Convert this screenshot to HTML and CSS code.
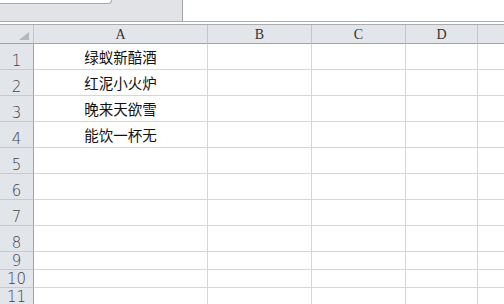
FILE: index.html
```html
<!DOCTYPE html>
<html lang="zh-CN">
<head>
    <meta charset="UTF-8">
    <title>Sheet1</title>
    <link rel="stylesheet" href="styles.css">
</head>
<body>
    <div class="topbar">
        <div class="namepane">
            <div class="nametab"></div>
        </div>
        <div class="formula"></div>
    </div>
    <div class="gap"></div>

    <div class="sheet">
        <!-- header row -->
        <div class="corner">
            <svg width="10" height="8" viewBox="0 0 10 8"><polygon points="10,0 10,8 0,8" fill="#b4b7bb"/></svg>
        </div>
        <div class="colhead">A</div>
        <div class="colhead">B</div>
        <div class="colhead">C</div>
        <div class="colhead">D</div>
        <div class="colhead last"></div>

        <div class="rowhead">1</div><div class="cell">绿蚁新醅酒</div><div class="cell"></div><div class="cell"></div><div class="cell"></div><div class="cell last"></div>
        <div class="rowhead">2</div><div class="cell">红泥小火炉</div><div class="cell"></div><div class="cell"></div><div class="cell"></div><div class="cell last"></div>
        <div class="rowhead">3</div><div class="cell">晚来天欲雪</div><div class="cell"></div><div class="cell"></div><div class="cell"></div><div class="cell last"></div>
        <div class="rowhead">4</div><div class="cell">能饮一杯无</div><div class="cell"></div><div class="cell"></div><div class="cell"></div><div class="cell last"></div>
        <div class="rowhead">5</div><div class="cell"></div><div class="cell"></div><div class="cell"></div><div class="cell"></div><div class="cell last"></div>
        <div class="rowhead">6</div><div class="cell"></div><div class="cell"></div><div class="cell"></div><div class="cell"></div><div class="cell last"></div>
        <div class="rowhead">7</div><div class="cell"></div><div class="cell"></div><div class="cell"></div><div class="cell"></div><div class="cell last"></div>
        <div class="rowhead">8</div><div class="cell"></div><div class="cell"></div><div class="cell"></div><div class="cell"></div><div class="cell last"></div>
        <div class="rowhead">9</div><div class="cell"></div><div class="cell"></div><div class="cell"></div><div class="cell"></div><div class="cell last"></div>
        <div class="rowhead">10</div><div class="cell"></div><div class="cell"></div><div class="cell"></div><div class="cell"></div><div class="cell last"></div>
        <div class="rowhead">11</div><div class="cell"></div><div class="cell"></div><div class="cell"></div><div class="cell"></div><div class="cell last"></div>
    </div>
</body>
</html>
```

FILE: styles.css
```css
* {
    margin: 0;
    padding: 0;
    box-sizing: border-box;
}
body {
    font-family: "Noto Sans CJK SC", sans-serif;
    background: #fff;
    color: #222;
    overflow: hidden;
}
.topbar {
    display: flex;
    height: 22px;
    border-bottom: 1px solid #a9abae;
}
.namepane {
    width: 183px;
    background: #e1e3e6;
    border-right: 1px solid #a3a5a8;
}
.nametab {
    width: 112px;
    height: 4px;
    background: #fff;
    border-bottom: 1px solid #a9abae;
    border-right: 1px solid #a9abae;
    border-bottom-right-radius: 6px;
}
.formula {
    flex: 1;
}
.gap {
    height: 2px;
    border-bottom: 1px solid #a9abae;
    box-sizing: content-box;
}
.sheet {
    display: grid;
    grid-template-columns: 34px 174px 104px 94px 72px 1fr;
    grid-template-rows: 19px repeat(8, 26px) repeat(3, 18px);
}
.corner, .colhead, .rowhead {
    background: #e2e5ea;
    border-right: 1px solid #c3c6cb;
    border-bottom: 1px solid #9fa2a6;
}
.corner {
    display: flex;
    justify-content: flex-end;
    align-items: flex-end;
    padding: 0 4px 3px 0;
}
.colhead {
    font-family: "Liberation Serif", serif;
    font-size: 14px;
    color: #333;
    text-align: center;
    line-height: 20px;
}
.colhead.last, .cell.last {
    border-right: none;
}
.rowhead {
    border-bottom: 1px solid #c6c9cd;
    border-right: 1px solid #9fa2a6;
    font-family: "DejaVu Sans", sans-serif;
    font-size: 15px;
    font-weight: 300;
    color: #444;
    display: flex;
    justify-content: center;
    align-items: flex-end;
    line-height: 16px;
    padding-bottom: 0;
}
.cell {
    border-right: 1px solid #d6d6d6;
    border-bottom: 1px solid #d6d6d6;
    font-size: 14.5px;
    color: #111;
    text-align: center;
    line-height: 25px;
}
```
